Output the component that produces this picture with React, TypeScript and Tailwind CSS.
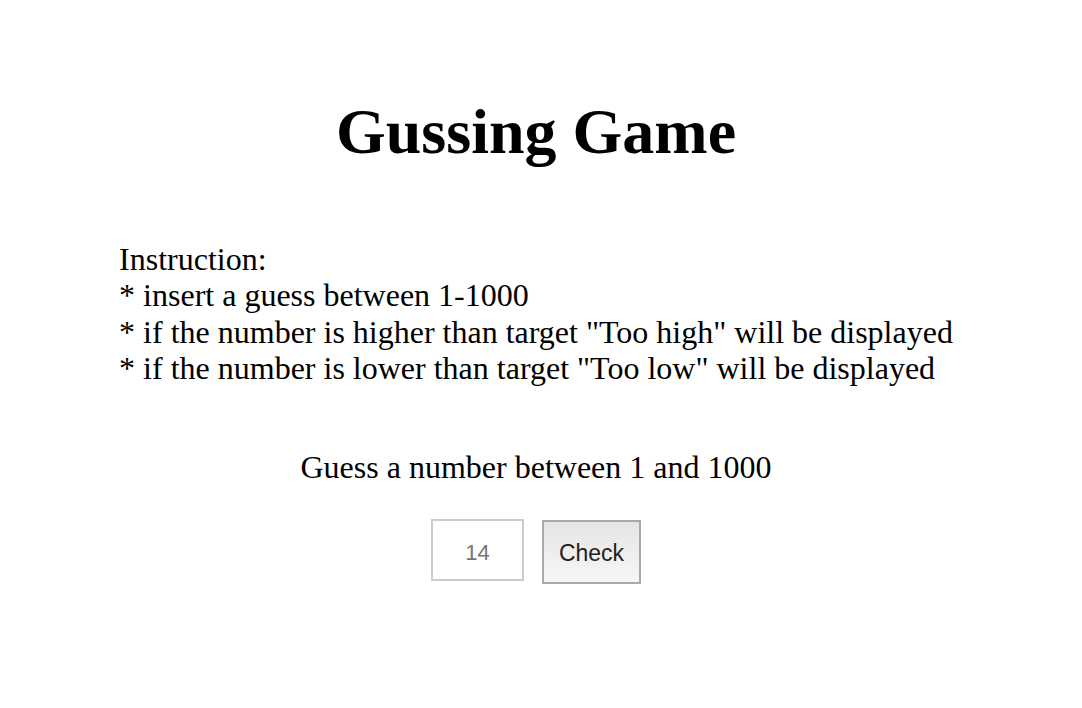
import React from "react";

export default function App() {
  return (
    <div className="min-h-[708px] w-full bg-white text-black" style={{ fontFamily: '"Liberation Serif", "Times New Roman", serif' }}>
      <div className="flex flex-col items-center pr-[10px]">
        <h1 className="mt-[95px] text-[64px] font-bold leading-[73.6px]">Gussing Game</h1>
        <div className="mt-[72px] text-left text-[32px] leading-[36.6px]">
          <div>Instruction:</div>
          <div>* insert a guess between 1-1000</div>
          <div>* if the number is higher than target "Too high" will be displayed</div>
          <div>* if the number is lower than target "Too low" will be displayed</div>
        </div>
        <p className="mt-[62px] text-[32px] leading-[36.6px]">Guess a number between 1 and 1000</p>
        <div className="mt-[33px] flex items-start gap-[18px]" style={{ fontFamily: '"Liberation Sans", Arial, sans-serif' }}>
          <input
            type="text"
            defaultValue="14"
            className="h-[62px] w-[93px] border-2 border-[#cccccc] bg-white pt-[6px] text-center text-[22px] text-[#757575] outline-none"
          />
          <button className="mt-[1px] h-[64px] w-[99px] border-[2.5px] border-[#a9a9a9] bg-gradient-to-b from-[#e5e5e5] to-[#f7f7f7] pt-[3px] text-[23px] text-[#222222]">
            Check
          </button>
        </div>
      </div>
    </div>
  );
}
